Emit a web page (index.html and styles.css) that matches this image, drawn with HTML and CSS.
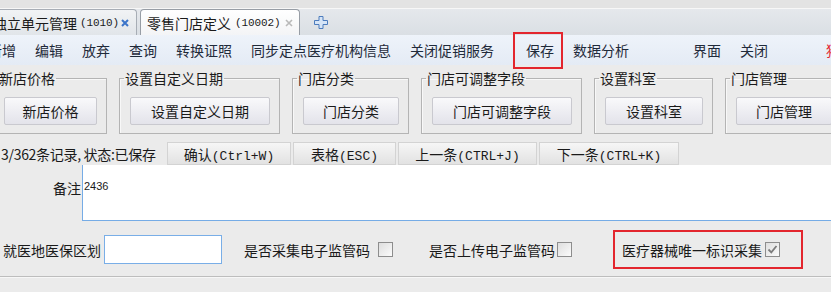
FILE: index.html
```html
<!DOCTYPE html>
<html lang="zh-CN">
<head>
  <meta charset="UTF-8">
  <meta name="viewport" content="width=device-width, initial-scale=1.0">
  <title>零售门店定义</title>
  <link rel="stylesheet" href="styles.css">
</head>
<body>

  <div class="tabbar">
    <div class="tabs">
      <div class="tab tab-first">
        <span>独立单元管理</span>
        <span class="num">(1010)</span>
        <svg class="close" width="8" height="8" viewBox="0 0 8 8"><path d="M1 1L7 7M7 1L1 7" stroke="#3b74c9" stroke-width="2"/></svg>
      </div>
      <div class="tab tab-active">
        <span>零售门店定义</span>
        <span class="num">(10002)</span>
        <svg class="close" width="8" height="8" viewBox="0 0 8 8"><path d="M1 1L7 7M7 1L1 7" stroke="#b9b9b9" stroke-width="1.6"/></svg>
      </div>
      <svg class="addtab" width="14" height="13" viewBox="0 0 14 13">
        <path d="M5 0.5H9V4.5H13.5V8.5H9V12.5H5V8.5H0.5V4.5H5Z" fill="#d6e5f7" stroke="#4d7cbd" stroke-width="1"/>
      </svg>
    </div>
  </div>

  <div class="toolbar">
    <span class="tool">新增</span>
    <span class="tool">编辑</span>
    <span class="tool">放弃</span>
    <span class="tool">查询</span>
    <span class="tool">转换证照</span>
    <span class="tool">同步定点医疗机构信息</span>
    <span class="tool">关闭促销服务</span>
    <span class="tool tool-save">保存</span>
    <span class="tool">数据分析</span>
    <span class="tool tool-view">界面</span>
    <span class="tool">关闭</span>
    <span class="tool tool-red">猪</span>
  </div>

  <div class="groups">
    <fieldset class="group">
      <legend>新店价格</legend>
      <button class="big-btn w93">新店价格</button>
    </fieldset>
    <fieldset class="group">
      <legend>设置自定义日期</legend>
      <button class="big-btn w140">设置自定义日期</button>
    </fieldset>
    <fieldset class="group">
      <legend>门店分类</legend>
      <button class="big-btn w96">门店分类</button>
    </fieldset>
    <fieldset class="group">
      <legend>门店可调整字段</legend>
      <button class="big-btn w140">门店可调整字段</button>
    </fieldset>
    <fieldset class="group">
      <legend>设置科室</legend>
      <button class="big-btn w98">设置科室</button>
    </fieldset>
    <fieldset class="group">
      <legend>门店管理</legend>
      <button class="big-btn w96">门店管理</button>
    </fieldset>
  </div>

  <div class="status">
    <span class="status-text">3/362条记录, 状态:已保存</span>
    <button class="nav-btn w124">确认<span class="key">(Ctrl+W)</span></button>
    <button class="nav-btn w103">表格<span class="key">(ESC)</span></button>
    <button class="nav-btn w139">上一条<span class="key">(CTRL+J)</span></button>
    <button class="nav-btn w140">下一条<span class="key">(CTRL+K)</span></button>
  </div>

  <div class="memo">
    <label class="memo-label">备注</label>
    <div class="memo-box">2436</div>
  </div>

  <div class="fields">
    <label class="field-label">就医地医保区划</label>
    <div class="text-input"></div>
    <label class="check-label gap-1">是否采集电子监管码</label>
    <span class="check space-8"></span>
    <label class="check-label gap-2">是否上传电子监管码</label>
    <span class="check space-2"></span>
    <div class="mark-box">
      <label class="check-label">医疗器械唯一标识采集</label>
      <span class="check checked">
        <svg width="11" height="11" viewBox="0 0 11 11"><path d="M1.5 5.5L4.3 8.3L9.5 2" fill="none" stroke="#7c7c7c" stroke-width="1.8"/></svg>
      </span>
    </div>
  </div>

  <div class="sep"></div>

</body>
</html>
```

FILE: styles.css
```css
html, body {
  margin: 0;
  padding: 0;
}
body {
  width: 831px;
  height: 292px;
  overflow: hidden;
  background: #ebebeb;
  font-family: "Noto Sans CJK SC", "Liberation Sans", sans-serif;
  font-size: 14px;
  color: #1a1a1a;
}

/* tab strip */
.tabbar {
  height: 35px;
  padding-top: 8px;
  box-sizing: border-box;
  background: #e3e3e3;
  border-bottom: 1px solid #808080;
}
.tabs {
  display: flex;
  align-items: flex-end;
  height: 27px;
  box-sizing: border-box;
  border-top: 1px solid #f7f7f7;
  background: linear-gradient(#e5e8ec, #dadfe4);
}
.tab {
  display: flex;
  align-items: center;
  height: 26px;
  box-sizing: border-box;
  border: 1px solid #a7adb5;
  border-bottom: 0;
  border-radius: 4px 4px 0 0;
  line-height: 20px;
  white-space: nowrap;
}
.tab-first {
  width: 147px;
  margin-left: -10px;
  padding-left: 2px;
  background: linear-gradient(#f1f3f5, #e1e5e9);
}
.tab-first .num {
  margin-left: 3px;
}
.tab-first .close {
  margin-left: 2px;
}
.tab-active {
  width: 160px;
  margin-left: 3px;
  padding-left: 6px;
  background: linear-gradient(#ffffff, #f3f4f6);
  border-color: #979da5;
}
.tab-active .num {
  margin-left: 4px;
}
.tab-active .close {
  margin-left: 4px;
}
.num {
  font-family: "Liberation Mono", monospace;
  font-size: 11px;
  letter-spacing: -0.1px;
}
.addtab {
  align-self: center;
  margin-left: 14px;
}

/* toolbar */
.toolbar {
  display: flex;
  gap: 19px;
  height: 30px;
  margin-left: -12px;
  background: linear-gradient(#eef3fa, #e4ebf5);
  line-height: 30px;
  white-space: nowrap;
}
.tool {
  position: relative;
  color: #1f2a3a;
}
.tool-save {
  margin-left: 13px;
}
.tool-save::after {
  content: "";
  position: absolute;
  left: -13px;
  right: -9px;
  top: -3px;
  bottom: -4px;
  border: 2px solid #e3262e;
}
.tool-view {
  margin-left: 45px;
}
.tool-red {
  margin-left: 39px;
  color: #e3262e;
}

/* group boxes */
.groups {
  display: flex;
  gap: 12px;
  margin: 5px 0 0 -7px;
}
.group {
  margin: 0;
  padding: 11px 9px 8px 10px;
  border: 1px solid #b4b4b4;
  box-shadow: inset 1px 1px 0 #f8f8f8;
  min-width: 0;
  flex-shrink: 0;
}
.group legend {
  padding: 0 1px;
  margin-left: -6px;
  line-height: 16px;
  color: #1a1a1a;
}
.big-btn {
  display: block;
  height: 28px;
  padding: 0;
  border: 1px solid #c9c9cf;
  border-radius: 2px;
  background: linear-gradient(#f9f9fb, #e3e3ea);
  font-family: inherit;
  font-size: 14px;
  color: #1a1a1a;
}
.w93 { width: 93px; }
.w96 { width: 96px; }
.w98 { width: 98px; }
.w140 { width: 140px; }

/* status row */
.status {
  display: flex;
  align-items: center;
  gap: 2px;
  height: 23px;
  margin-top: 8px;
}
.status-text {
  width: 165px;
  padding-left: 1px;
  box-sizing: border-box;
  white-space: nowrap;
  letter-spacing: -0.3px;
}
.nav-btn {
  height: 23px;
  padding: 0;
  border: 1px solid #d3d3d3;
  background: linear-gradient(#f6f6f6, #e2e2e2);
  font-family: inherit;
  font-size: 14px;
  color: #1a1a1a;
  white-space: nowrap;
}
.key {
  font-family: "Liberation Mono", monospace;
  font-size: 13px;
}
.w103 { width: 103px; }
.w124 { width: 124px; }
.w139 { width: 139px; }

/* memo */
.memo {
  display: flex;
}
.memo-label {
  width: 82px;
  padding: 13px 1px 0 0;
  box-sizing: border-box;
  text-align: right;
  line-height: 20px;
}
.memo-box {
  flex: 1;
  height: 56px;
  margin-right: -10px;
  padding: 14px 0 0 1px;
  box-sizing: border-box;
  border: 1px solid #76ace6;
  border-top: 0;
  background: #ffffff;
  font-family: "Liberation Sans", sans-serif;
  font-size: 11px;
  line-height: 14px;
}

/* bottom fields */
.fields {
  display: flex;
  align-items: center;
  height: 39px;
  margin-top: 9px;
  white-space: nowrap;
}
.field-label {
  padding-left: 3px;
  margin-right: 3px;
}
.text-input {
  width: 118px;
  height: 29px;
  box-sizing: border-box;
  border: 1px solid #79aee7;
  background: #ffffff;
}
.check-label {
  line-height: 20px;
}
.gap-1 { margin-left: 22px; }
.gap-2 { margin-left: 36px; }
.space-8 { margin-left: 8px; }
.space-2 { margin-left: 2px; }
.check {
  display: inline-flex;
  align-items: center;
  justify-content: center;
  width: 15px;
  height: 15px;
  box-sizing: border-box;
  border: 1px solid #8d8d8d;
  background: linear-gradient(135deg, #dedede, #fbfbfb);
}
.mark-box {
  display: flex;
  align-items: center;
  height: 39px;
  margin-left: 41px;
  padding: 0 21px 0 7px;
  box-sizing: border-box;
  border: 2px solid #e3262e;
}
.checked {
  margin-left: 3px;
}

.sep {
  margin-top: 7px;
  border-top: 1px solid #bdbdbd;
  border-bottom: 1px solid #f7f7f7;
}
```
